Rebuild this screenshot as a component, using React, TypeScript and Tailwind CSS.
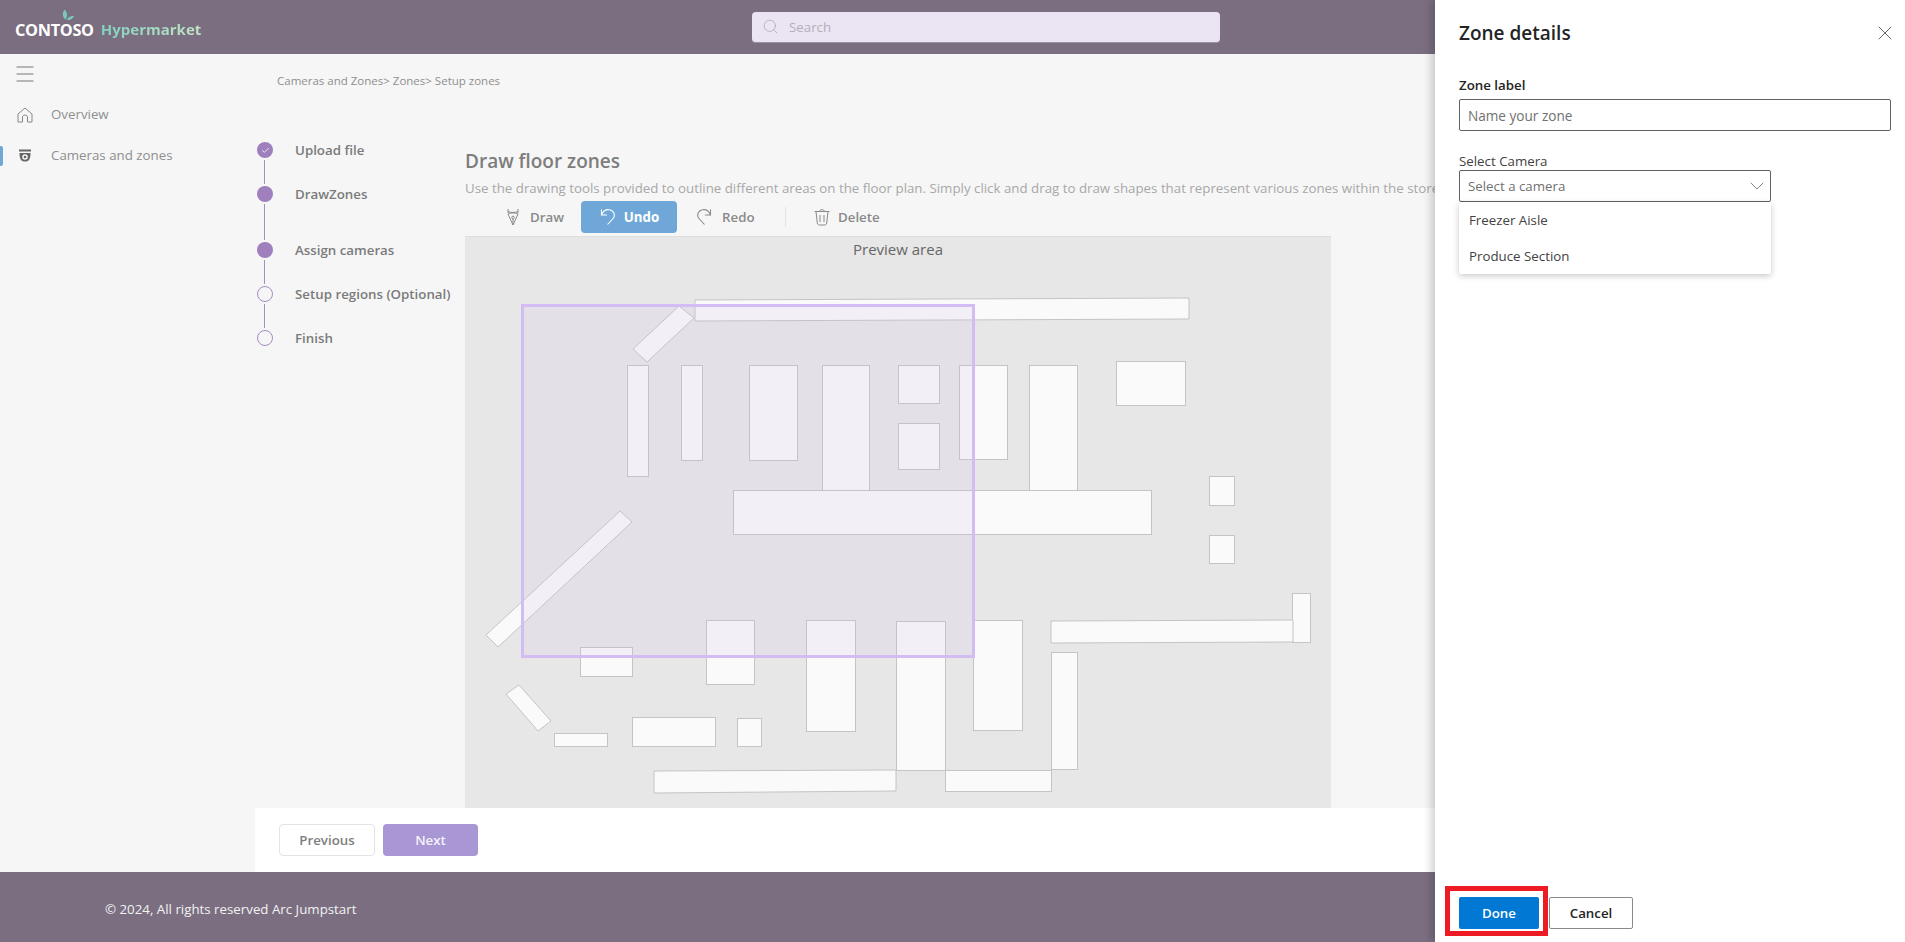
import React from "react";
import { Search, X, ChevronDown, Check, Menu } from "lucide-react";

const font = "font-['Open_Sans','Noto_Sans',sans-serif]";

// floor plan shapes in page coordinates (viewBox follows the preview panel)
const rects: [number, number, number, number][] = [
  [627, 365, 648, 476],
  [681, 365, 702, 460],
  [749, 365, 797, 460],
  [822, 365, 869, 490],
  [898, 365, 939, 403],
  [898, 423, 939, 469],
  [959, 365, 1007, 459],
  [1029, 365, 1077, 490],
  [1116, 361, 1185, 405],
  [733, 490, 1151, 534],
  [1209, 476, 1234, 505],
  [1209, 535, 1234, 563],
  [1292, 593, 1310, 642],
  [1051, 652, 1077, 769],
  [945, 770, 1051, 791],
  [973, 620, 1022, 730],
  [580, 647, 632, 676],
  [706, 620, 754, 684],
  [806, 620, 855, 731],
  [896, 621, 945, 770],
  [554, 733, 607, 746],
  [632, 717, 715, 746],
  [737, 718, 761, 746],
];

const polys: string[] = [
  "695,300 1189,298 1189,319 695,321",
  "679,306 694,318 647,362 633,349",
  "1051,621 1293,620 1293,642 1051,643",
  "620,511 632,522 498,647 486,635",
  "519,685 551,721 538,731 506,694",
  "654,771 896,770 896,791 654,793",
];

const steps = [
  { label: "Upload file", state: "done", gap: "h-[24px]" },
  { label: "DrawZones", state: "filled", gap: "h-[36px]" },
  { label: "Assign cameras", state: "filled", gap: "h-[24px]" },
  { label: "Setup regions (Optional)", state: "empty", gap: "h-[24px]" },
  { label: "Finish", state: "empty", gap: "" },
];

const FloorPlan = () => (
  <svg viewBox="465 237 866 571" className="absolute inset-0 w-full h-full">
    {rects.map(([x1, y1, x2, y2], i) => (
      <rect key={i} x={x1 + 0.5} y={y1 + 0.5} width={x2 - x1} height={y2 - y1} fill="#fafafa" stroke="#c4c4c4" />
    ))}
    {polys.map((p, i) => (
      <polygon key={i} points={p} fill="#fafafa" stroke="#c4c4c4" />
    ))}
    <rect x="522.5" y="305.5" width="451" height="351" fill="#cec2e7" fillOpacity="0.16" stroke="#d3bcf3" strokeWidth="3" />
  </svg>
);

const Stepper = () => (
  <div className="w-[210px] pt-[51px] pl-[2px] shrink-0">
    {steps.map((s) => (
      <div key={s.label}>
        <div className="flex items-center h-[20px]">
          <span
            className={
              s.state === "empty"
                ? "w-4 h-4 rounded-full border border-[#a58cc4] flex items-center justify-center"
                : "w-4 h-4 rounded-full bg-[#a07fbd] flex items-center justify-center"
            }
          >
            {s.state === "done" && <Check size={9} strokeWidth={2} className="text-white" />}
          </span>
          <span className="ml-[22px] pt-[2px] text-[13.3px] font-semibold text-[#7b7b7b] whitespace-nowrap">{s.label}</span>
        </div>
        {s.gap && <div className={`w-px bg-[#a58cc4] ml-[7px] ${s.gap}`} />}
      </div>
    ))}
  </div>
);

const Toolbar = () => (
  <div className="flex items-center h-[32px] mt-[3px] text-[13.3px] font-semibold text-[#8a8a8a]">
    <div className="flex items-center ml-[40px] w-[76px]">
      <svg width="16" height="18" viewBox="0 0 16 18" fill="none" stroke="#8a8a8a" strokeWidth="1">
        <path d="M3 1v4M13 1v4M3 3.500c2 1.300 8 1.300 10 0M3 6 L8 17 L13 6 C11 4.500 5 4.500 3 6Z" />
        <circle cx="8" cy="9.500" r="1.300" />
        <path d="M8 11v6" />
      </svg>
      <span className="ml-[9px] pt-[2px]">Draw</span>
    </div>
    <div className="flex items-center justify-center w-[96px] h-[32px] rounded-[4px] bg-[#6fa8d8] text-white font-bold">
      <svg width="18" height="18" viewBox="0 0 18 18" fill="none" stroke="#fff" strokeWidth="1.100">
        <path d="M2.500 1.500 V7 H8" />
        <path d="M2.500 7 C4 3.500 7 1 10.500 1.800 C14.500 2.500 16.500 6.500 14.500 10 L8.500 16.500" />
      </svg>
      <span className="ml-[7px] pt-[2px]">Undo</span>
    </div>
    <div className="flex items-center ml-[18px] w-[90px]">
      <svg width="18" height="18" viewBox="0 0 18 18" fill="none" stroke="#8a8a8a" strokeWidth="1.100">
        <path d="M15.500 1.500 V7 H10" />
        <path d="M15.500 7 C14 3.500 11 1 7.500 1.800 C3.500 2.500 1.500 6.500 3.500 10 L9.500 16.500" />
      </svg>
      <span className="ml-[9px] pt-[2px]">Redo</span>
    </div>
    <div className="w-px h-[20px] bg-[#e3e3e3]" />
    <div className="flex items-center ml-[28px]">
      <svg width="16" height="18" viewBox="0 0 16 18" fill="none" stroke="#8a8a8a" strokeWidth="1">
        <path d="M0.500 3.500 H15.500 M5.500 3.500 C5.500 1 10.500 1 10.500 3.500 M2 3.500 L3.300 15 C3.500 16.500 4.500 17 5.500 17 H10.500 C11.500 17 12.500 16.500 12.700 15 L14 3.500 M6 7 V14 M10 7 V14" />
      </svg>
      <span className="ml-[8px] pt-[2px]">Delete</span>
    </div>
  </div>
);

const ZonePanel = () => (
  <aside className="absolute top-0 right-0 bottom-0 w-[470px] bg-white shadow-[-4px_0_8px_rgba(0,0,0,0.18)] flex flex-col pl-[24px] pr-[14px] text-[#242424]">
    <div className="flex items-center justify-between h-[66px]">
      <h2 className="text-[19px] font-semibold">Zone details</h2>
      <X size={24} strokeWidth={0.8} className="text-[#444] mr-[-6px]" />
    </div>
    <label className="mt-[9px] text-[13.3px] font-semibold leading-[20px]">Zone label</label>
    <div className="mt-[4px] h-[32px] border border-[#616161] rounded-[2px] flex items-center pl-[8px] pt-[2px] text-[13.6px] text-[#707070]">
      Name your zone
    </div>
    <label className="mt-[22px] text-[13.3px] leading-[17px] h-[17px] text-[#424242]">Select Camera</label>
    <div className="w-[312px] h-[32px] border border-[#616161] rounded-[2px] flex items-center justify-between pl-[8px] pr-[1px] text-[13.3px] text-[#707070]">
      <span className="pt-[2px]">Select a camera</span>
      <ChevronDown size={24} strokeWidth={0.8} className="text-[#666]" />
    </div>
    <ul className="w-[312px] rounded-[2px] shadow-[0_2px_6px_rgba(0,0,0,0.22)] text-[13.3px] text-[#424242]">
      <li className="h-[36px] flex items-center pl-[10px] pt-[2px]">Freezer Aisle</li>
      <li className="h-[36px] flex items-center pl-[10px] pt-[2px]">Produce Section</li>
    </ul>
    <div className="mt-auto mb-[13px] flex items-center gap-[10px]">
      <button className="relative w-[80px] h-[32px] pt-[2px] rounded-[2px] bg-[#0078d4] text-white text-[13.3px] font-semibold">
        Done
        <span className="absolute left-[-14px] right-[-9px] top-[-11px] bottom-[-7px] border-[5px] border-[#ed1c24]" />
      </button>
      <button className="w-[84px] h-[32px] pt-[2px] rounded-[2px] border border-[#8a8a8a] text-[13.3px] font-semibold text-[#242424]">
        Cancel
      </button>
    </div>
  </aside>
);

export default function App() {
  return (
    <div className={`relative h-[942px] overflow-hidden flex flex-col bg-[#f6f6f6] ${font}`}>
      <header className="h-[54px] bg-[#7a6e80] flex items-center shrink-0">
        <div className="w-[752px] pl-[15px] pt-[5px] flex items-center shrink-0">
          <div className="relative pt-[2px]">
            <svg width="13" height="13" viewBox="0 0 14 13" className="absolute left-[47px] top-[-7px]">
              <path d="M3 0 C0 3 0 8 4 11 C6 7 6 4 3 0Z" fill="#79c9b8" />
              <path d="M5 11 C8 7 10 7 13 7 C11 11 8 12 5 11Z" fill="#79c9b8" />
            </svg>
            <span className="text-[16.300px] font-bold text-white tracking-[-0.3px]">CONTOSO</span>
          </div>
          <span className="ml-[7px] text-[15px] font-bold text-transparent bg-clip-text bg-gradient-to-r from-[#7fd1bf] to-[#c2e6c4]">
            Hypermarket
          </span>
        </div>
        <div className="w-[468px] h-[31px] rounded-[4px] bg-[#ebe5f3] border-b border-[#9a94a0] flex items-center pl-[10px] text-[13.3px] text-[#b5aeb8]">
          <Search size={17} strokeWidth={1} className="text-[#a8a2ac]" />
          <span className="ml-[10px] pt-[2px]">Search</span>
        </div>
      </header>

      <div className="flex-1 flex min-h-0">
        <nav className="w-[255px] shrink-0 text-[13.3px] text-[#8f8f8f]">
          <Menu size={24} strokeWidth={1.2} className="ml-[13px] mt-[8px] text-[#777]" />
          <div className="flex items-center h-[20px] mt-[19px] ml-[17px]">
            <svg width="16" height="16" viewBox="0 0 16 16" fill="none" stroke="#888" strokeWidth="1">
              <path d="M1 7 L8 1 L15 7 V15 H10.500 V10 C10.500 7.500 5.500 7.500 5.500 10 V15 H1Z" />
            </svg>
            <span className="ml-[18px]">Overview</span>
          </div>
          <div className="relative flex items-center h-[20px] mt-[21px] ml-[17px]">
            <span className="absolute left-[-17px] top-0 w-[3px] h-[20px] rounded-r-[2px] bg-[#6fa8d8]" />
            <svg width="16" height="16" viewBox="0 0 16 16">
              <path d="M2 1.500 H14 V3.500 H2Z" fill="#666" />
              <path d="M2.500 5 H13.500 C13.500 11 12 13.500 8 13.500 C4 13.500 2.500 11 2.500 5Z" fill="#666" />
              <circle cx="8" cy="9" r="2.800" fill="#f6f6f6" />
              <circle cx="8" cy="9" r="1.300" fill="#666" />
            </svg>
            <span className="ml-[18px] font-medium">Cameras and zones</span>
          </div>
        </nav>

        <main className="flex-1 min-w-0 flex flex-col">
          <div className="flex-1 min-h-0 flex flex-col">
            <div className="h-[16px] mt-[19px] ml-[22px] text-[11.500px] leading-[16px] text-[#8f8f8f]">
              Cameras and Zones&gt; Zones&gt; Setup zones
            </div>
            <div className="flex-1 min-h-0 flex">
              <Stepper />
              <section className="flex-1 min-w-0 flex flex-col">
                <h1 className="mt-[58px] text-[19px] leading-[28px] font-semibold text-[#7d7d7d]">Draw floor zones</h1>
                <p className="text-[13.3px] leading-[20px] mt-[3px] text-[#a8a8a8] whitespace-nowrap">
                  Use the drawing tools provided to outline different areas on the floor plan. Simply click and drag to draw shapes that represent various zones within the store.
                </p>
                <Toolbar />
                <div className="relative mt-[4px] w-[866px] flex-1 bg-[#e7e7e7] shadow-[0_-1px_0_#dedede] text-center text-[15px] leading-[24px] text-[#666]">
                  <FloorPlan />
                  <span className="relative">Preview area</span>
                </div>
              </section>
            </div>
          </div>
          <div className="h-[64px] bg-white shrink-0 flex items-center pl-[24px] gap-[8px] text-[13.3px] font-semibold">
            <button className="w-[96px] h-[32px] pt-[2px] rounded-[4px] border border-[#e3e3e3] text-[#7d7d7d]">Previous</button>
            <button className="w-[95px] h-[32px] pt-[2px] rounded-[4px] bg-[#a996d4] text-[#f6f2fb]">Next</button>
          </div>
        </main>
      </div>

      <footer className="h-[70px] bg-[#7a6e80] shrink-0 flex items-center pl-[105px] pt-[6px] text-[13.3px] text-[#f2f2f2]">
        © 2024, All rights reserved Arc Jumpstart
      </footer>

      <ZonePanel />
    </div>
  );
}
